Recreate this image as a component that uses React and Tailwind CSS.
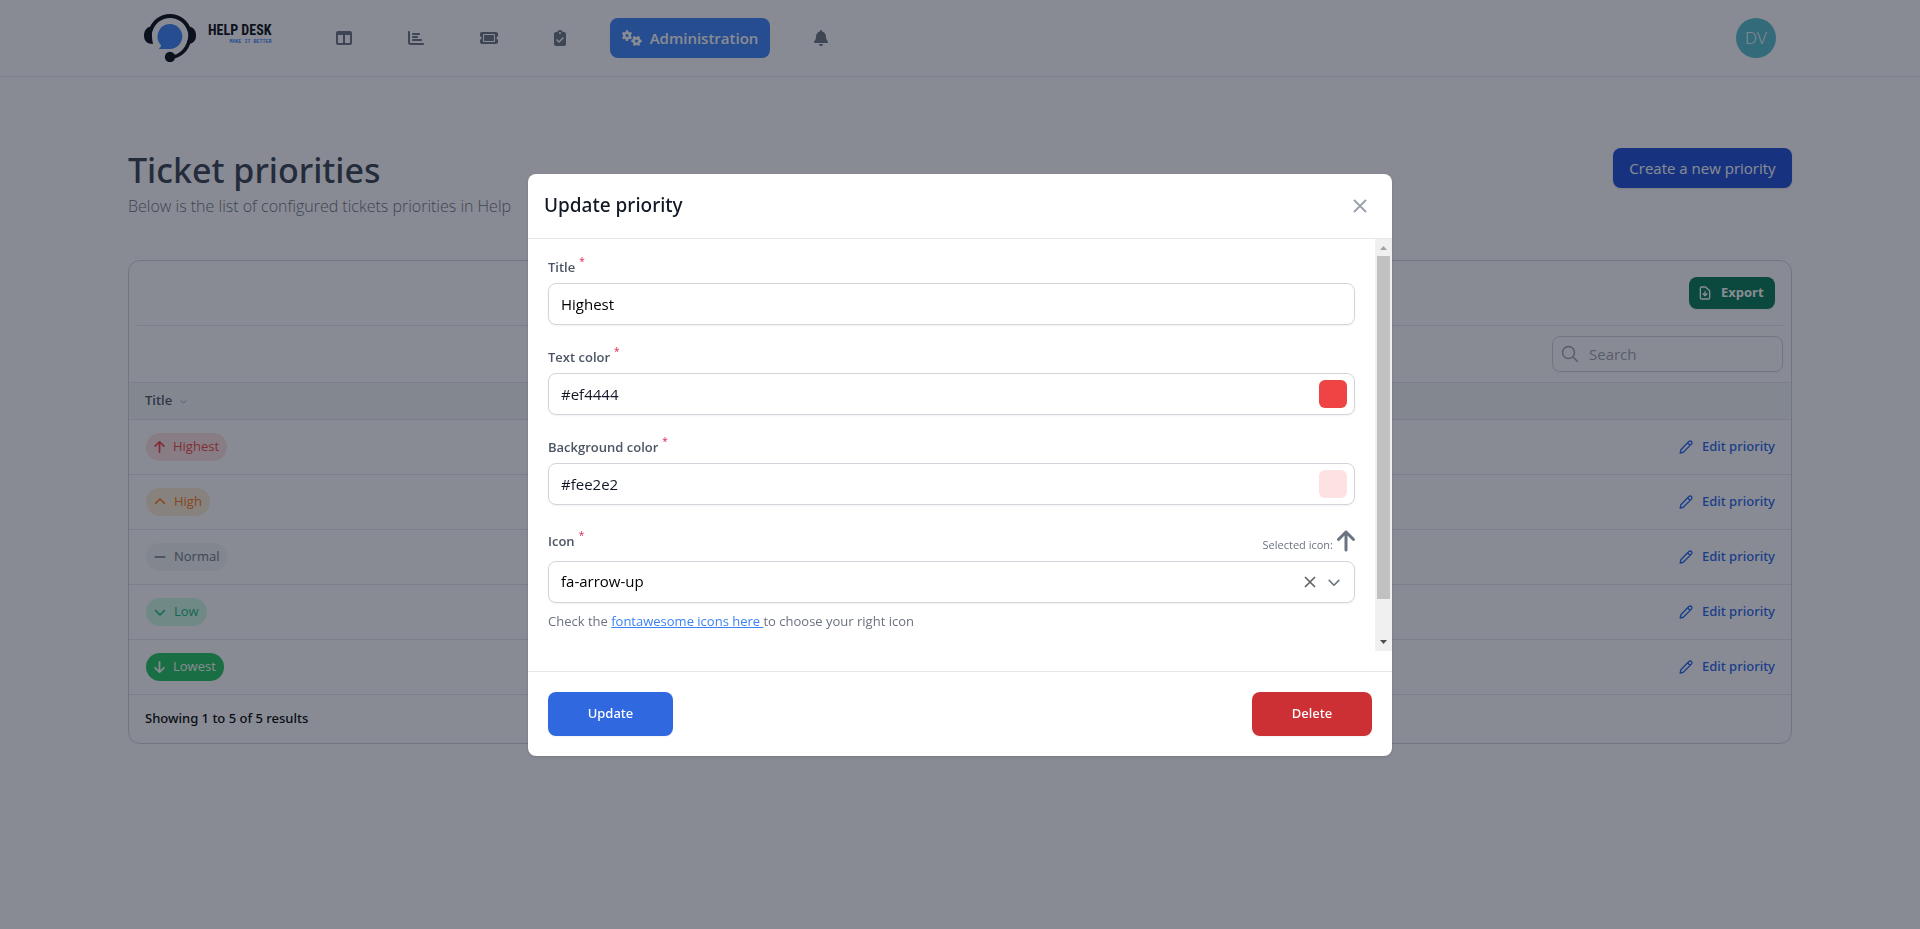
import React from "react";
import {
  FaArrowDown,
  FaArrowUp,
  FaBell,
  FaChevronDown,
  FaChevronUp,
  FaMinus,
} from "react-icons/fa6";

const priorities = [
  { title: "Highest", icon: FaArrowUp, iconSize: "w-[11px]", badge: "bg-[#fee2e2] text-[#ef4444]" },
  { title: "High", icon: FaChevronUp, iconSize: "w-3", badge: "bg-[#ffedd5] text-[#f97316]" },
  { title: "Normal", icon: FaMinus, iconSize: "w-3", badge: "bg-[#f3f4f6] text-[#6b7280]" },
  { title: "Low", icon: FaChevronDown, iconSize: "w-3", badge: "bg-[#d1fae5] text-[#10b981]" },
  { title: "Lowest", icon: FaArrowDown, iconSize: "w-[11px]", badge: "bg-[#22c55e] text-white" },
];

function Logo() {
  return (
    <a href="#home" aria-label="Help Desk" className="flex w-[148px] items-center gap-3">
      <svg viewBox="0 0 52 48" className="h-12 w-[52px] shrink-0" aria-hidden="true">
        <path d="M6 18C9 8 16.5 2 26 2s17 6 20 16" fill="none" stroke="#060a14" strokeWidth="4" />
        <path d="M45.5 26C43 36 36 42.5 28 43" fill="none" stroke="#060a14" strokeWidth="3.6" />
        <path d="M9 12.2C3 12.5 0 16 0 21.500C0 27 3 30 9 30C7.600 24 7.600 18 9 12.200Z" fill="#060a14" />
        <path d="M43 12.200C49 12.500 52 16 52 21.500C52 27 49 30 43 30C44.600 24 44.600 18 43 12.200Z" fill="#060a14" />
        <circle cx="26" cy="43" r="5.200" fill="#060a14" />
        <path d="M26 10a12.300 12.500 0 1 1 0 25H14.500c1.600-1 2.400-2.200 2.500-3.800A12.300 12.500 0 0 1 26 10Z" fill="#3b82f6" />
      </svg>
      <span className="flex flex-col items-end pb-2">
        <span className="font-['Roboto_Condensed','Roboto',sans-serif] text-[14px] leading-4 font-bold whitespace-nowrap text-[#060a14]">
          HELP DESK
        </span>
        <span className="font-['Liberation_Mono',monospace] text-[5px] leading-[8px] font-bold whitespace-nowrap text-[#3b82f6]">
          MAKE IT BETTER
        </span>
      </span>
    </a>
  );
}

function NavLink({ label, children }) {
  return (
    <a href={"#" + label.toLowerCase()} aria-label={label} className="flex h-10 items-center px-3 text-[#6b7280]">
      {children}
    </a>
  );
}

function Header() {
  return (
    <header className="border-b border-[#e5e7eb] bg-white">
      <div className="flex h-[76px] items-center justify-between px-36">
        <nav className="flex items-center gap-8">
          <Logo />
          <NavLink label="Board">
            <svg viewBox="0 0 512 512" className="size-4" fill="currentColor">
              <path d="M0 96C0 60.700 28.700 32 64 32H448c35.300 0 64 28.700 64 64V416c0 35.300-28.700 64-64 64H64c-35.300 0-64-28.700-64-64V96zm64 64V416H224V160H64zm384 0H288V416H448V160z" />
            </svg>
          </NavLink>
          <NavLink label="Analytics">
            <svg viewBox="0 0 512 512" className="size-4" fill="currentColor">
              <path d="M32 32c17.700 0 32 14.300 32 32V400c0 8.800 7.200 16 16 16H480c17.700 0 32 14.300 32 32s-14.300 32-32 32H80c-44.200 0-80-35.800-80-80V64C0 46.300 14.300 32 32 32zm96 96c0-17.700 14.300-32 32-32l192 0c17.700 0 32 14.300 32 32s-14.300 32-32 32l-192 0c-17.700 0-32-14.300-32-32zm32 64H288c17.700 0 32 14.300 32 32s-14.300 32-32 32H160c-17.700 0-32-14.300-32-32s14.300-32 32-32zm0 96H416c17.700 0 32 14.300 32 32s-14.300 32-32 32H160c-17.700 0-32-14.300-32-32s14.300-32 32-32z" />
            </svg>
          </NavLink>
          <NavLink label="Tickets">
            <svg viewBox="0 0 576 512" className="h-4 w-[18px]" fill="currentColor">
              <path d="M64 64C28.700 64 0 92.700 0 128v64c0 8.800 7.400 15.700 15.700 18.600C34.500 217.100 48 235 48 256s-13.500 38.900-32.300 45.400C7.400 304.300 0 311.200 0 320v64c0 35.300 28.700 64 64 64H512c35.300 0 64-28.700 64-64V320c0-8.800-7.400-15.700-15.700-18.600C541.500 294.900 528 277 528 256s13.500-38.900 32.300-45.400c8.300-2.900 15.700-9.800 15.700-18.600V128c0-35.300-28.700-64-64-64H64zm64 112l0 160c0 8.800 7.200 16 16 16H432c8.800 0 16-7.200 16-16V176c0-8.800-7.200-16-16-16H144c-8.800 0-16 7.200-16 16zM96 160c0-17.700 14.300-32 32-32H448c17.700 0 32 14.300 32 32V352c0 17.700-14.300 32-32 32H128c-17.700 0-32-14.300-32-32V160z" />
            </svg>
          </NavLink>
          <NavLink label="Tasks">
            <svg viewBox="0 0 384 512" className="h-4 w-3" fill="currentColor">
              <path d="M192 0c-41.800 0-77.400 26.700-90.500 64H64C28.700 64 0 92.700 0 128V448c0 35.300 28.700 64 64 64H320c35.300 0 64-28.700 64-64V128c0-35.300-28.700-64-64-64H282.500C269.400 26.700 233.800 0 192 0zm0 64a32 32 0 1 1 0 64 32 32 0 1 1 0-64zM305 273L177 401c-9.400 9.400-24.600 9.400-33.900 0L79 337c-9.400-9.400-9.400-24.600 0-33.900s24.600-9.400 33.900 0l47 47L271 239c9.400-9.400 24.600-9.400 33.900 0s9.400 24.600 0 33.900z" />
            </svg>
          </NavLink>
          <a
            href="#administration"
            className="flex h-10 w-40 items-center justify-center gap-2 rounded-lg bg-[#3b82f6] text-[15px] font-semibold text-white"
          >
            <svg viewBox="0 0 640 512" className="h-4 w-5" fill="currentColor" aria-hidden="true">
              <path d="M308.500 135.300c7.100-6.300 9.900-16.200 6.200-25c-2.300-5.300-4.800-10.500-7.600-15.500L304 89.400c-3-5-6.300-9.900-9.800-14.600c-5.700-7.600-15.700-10.100-24.700-7.100l-28.200 9.300c-10.700-8.800-23-16-36.200-20.900L199 27.100c-1.900-9.300-9.100-16.700-18.500-17.800C173.900 8.400 167.200 8 160.400 8h-.700c-6.800 0-13.500 .4-20.100 1.200c-9.400 1.100-16.600 8.600-18.500 17.800L115 56.100c-13.300 5-25.500 12.100-36.200 20.900L50.500 67.800c-9-3-19-.5-24.700 7.100c-3.500 4.700-6.800 9.600-9.900 14.600l-3 5.300c-2.800 5-5.300 10.200-7.600 15.600c-3.700 8.700-.9 18.600 6.200 25l22.200 19.800C32.600 161.900 31.600 170.600 31.600 179.500s1 17.600 2.200 25.900L11.500 225c-7.100 6.300-9.900 16.200-6.200 25c2.300 5.300 4.800 10.500 7.600 15.600l3 5.200c3 5.100 6.300 9.900 9.900 14.600c5.700 7.600 15.700 10.100 24.700 7.100l28.200-9.300c10.700 8.800 23 16 36.200 20.900l6.100 29.100c1.900 9.300 9.100 16.700 18.500 17.800c6.700 .8 13.500 1.200 20.400 1.200s13.700-.4 20.400-1.200c9.400-1.100 16.600-8.600 18.500-17.800l6.100-29.100c13.300-5 25.500-12.100 36.200-20.900l28.200 9.300c9 3 19 .5 24.700-7.100c3.500-4.700 6.800-9.500 9.800-14.600l3.100-5.400c2.800-5 5.300-10.200 7.600-15.500c3.700-8.700 .9-18.600-6.200-25l-22.200-19.800c1.200-8.300 1.900-17 1.900-25.800s-1-17.600-1.900-25.900l22.200-19.900zM112 176a48 48 0 1 1 96 0 48 48 0 1 1-96 0zM504.700 500.500c6.300 7.100 16.200 9.900 25 6.200c5.300-2.300 10.500-4.800 15.500-7.600l5.400-3.100c5-3 9.900-6.300 14.600-9.800c7.600-5.700 10.100-15.700 7.100-24.700l-9.300-28.200c8.800-10.700 16-23 20.900-36.200l29.100-6.100c9.300-1.900 16.700-9.100 17.800-18.500c.8-6.700 1.200-13.500 1.200-20.400s-.4-13.700-1.200-20.400c-1.100-9.400-8.600-16.600-17.800-18.500L583.900 307c-5-13.300-12.100-25.500-20.900-36.200l9.300-28.200c3-9 .5-19-7.100-24.700c-4.700-3.500-9.600-6.800-14.600-9.900l-5.300-3c-5-2.800-10.200-5.300-15.600-7.600c-8.700-3.700-18.600-.9-25 6.200l-19.800 22.200c-8.200-1.200-16.900-1.900-25.800-1.900s-17.600 1-25.900 1.900l-19.800-22.200c-6.300-7.100-16.200-9.900-25-6.200c-5.300 2.300-10.500 4.800-15.600 7.600l-5.200 3c-5.100 3-9.900 6.300-14.600 9.900c-7.600 5.700-10.100 15.700-7.100 24.700l9.300 28.200c-8.800 10.700-16 23-20.900 36.200L315.100 313c-9.300 1.900-16.700 9.100-17.800 18.500c-.8 6.700-1.200 13.500-1.200 20.400s.4 13.700 1.200 20.400c1.100 9.400 8.600 16.600 17.800 18.500l29.100 6.100c5 13.300 12.100 25.500 20.900 36.200l-9.300 28.200c-3 9-.5 19 7.100 24.700c4.700 3.500 9.500 6.800 14.600 9.800l5.400 3.100c5 2.800 10.200 5.300 15.500 7.600c8.700 3.700 18.600 .9 25-6.200l19.800-22.200c8.200 1.200 16.900 1.900 25.800 1.900s17.600-1 25.900-1.900l19.800 22.200zM464 304a48 48 0 1 1 0 96 48 48 0 1 1 0-96z" />
            </svg>
            Administration
          </a>
          <NavLink label="Notifications">
            <FaBell className="h-4 w-[14px]" />
          </NavLink>
        </nav>
        <button
          type="button"
          aria-label="Account menu"
          className="flex size-10 items-center justify-center rounded-full bg-[#56bfcc] text-[17px] font-light text-white"
        >
          DV
        </button>
      </div>
    </header>
  );
}

function PencilIcon() {
  return (
    <svg viewBox="0 0 20 20" className="size-4" fill="none" stroke="currentColor" strokeWidth="1.700" strokeLinejoin="round" aria-hidden="true">
      <path d="M13.600 3.200a2.200 2.200 0 0 1 3.200 3.200L6.600 16.600l-3.900 1 .9-4.200L13.600 3.200Z M12 4.800l3.200 3.200" />
    </svg>
  );
}

function PrioritiesCard() {
  return (
    <section className="rounded-xl border border-[#d1d5db] bg-white">
      <div className="px-2">
        <div className="flex h-[65px] items-center justify-end border-b border-[#e5e7eb] px-2">
          <button
            type="button"
            className="flex h-8 w-[86px] items-center gap-2 rounded-lg bg-[#057a55] px-2 text-[13px] font-bold text-white shadow-xs"
          >
            <svg viewBox="0 0 24 24" className="size-4" fill="none" stroke="currentColor" strokeWidth="2" strokeLinejoin="round" strokeLinecap="round" aria-hidden="true">
              <path d="M12 10v6m0 0l-3-3m3 3l3-3m2 8H7a2 2 0 01-2-2V5a2 2 0 012-2h5.600a1 1 0 01.7.3l5.400 5.400a1 1 0 01.3.7V19a2 2 0 01-2 2z" />
            </svg>
            Export
          </button>
        </div>
        <div className="flex h-14 items-center justify-end">
          <label className="flex h-9 w-[231px] items-center gap-2 rounded-lg border border-[#d1d5db] px-2 text-[#9ca3af] shadow-xs">
            <svg viewBox="0 0 24 24" className="size-[18px] shrink-0" fill="none" stroke="currentColor" strokeWidth="2" strokeLinecap="round" aria-hidden="true">
              <circle cx="10" cy="10" r="8" />
              <path d="M16 16l6 6" />
            </svg>
            <input
              type="search"
              aria-label="Search"
              placeholder="Search"
              className="h-full w-full min-w-0 bg-transparent pl-0.5 text-[15px] outline-none placeholder:text-[#9ca3af]"
            />
          </label>
        </div>
      </div>
      <table className="w-full border-t border-[#e5e7eb]">
        <thead>
          <tr className="h-[37px] border-b border-[#e5e7eb] bg-[#f5f8f8]">
            <th className="px-4 text-left text-[13px] font-semibold text-[#4b5563]">
              <span className="flex items-center gap-2">
                Title
                <FaChevronDown className="size-[7px] text-[#b0b5be]" />
              </span>
            </th>
            <th className="px-4" aria-label="Actions" />
          </tr>
        </thead>
        <tbody>
          {priorities.map(({ title, icon: Icon, iconSize, badge }) => (
            <tr key={title} className="h-[55px] border-b border-[#e5e7eb]">
              <td className="px-4">
                <span className={`ml-px inline-flex h-7 items-center gap-2 rounded-full px-2 text-[13px] ${badge}`}>
                  <Icon className={`h-[14px] ${iconSize}`} />
                  {title}
                </span>
              </td>
              <td className="px-4">
                <div className="flex justify-end">
                  <a href={"#edit-" + title.toLowerCase()} className="flex items-center gap-2 font-['Noto_Sans',sans-serif] text-[13px] font-medium text-[#2563eb]">
                    <PencilIcon />
                    Edit priority
                  </a>
                </div>
              </td>
            </tr>
          ))}
        </tbody>
      </table>
      <p className="flex h-12 items-center px-4 font-['Noto_Sans',sans-serif] text-[13px] font-medium text-black">
        Showing 1 to 5 of 5 results
      </p>
    </section>
  );
}

function FieldLabel({ htmlFor, children }) {
  return (
    <label htmlFor={htmlFor} className="flex text-[13px] leading-4 font-semibold text-[#4b5563]">
      {children}
      <span className="-mt-1 pl-1 text-[10px] leading-3 font-medium text-[#e02450]">*</span>
    </label>
  );
}

const fieldBox = "flex h-[42px] items-center rounded-lg border border-[#d1d5db] bg-white shadow-xs";
const fieldText = "h-full min-w-0 flex-1 rounded-lg bg-transparent px-3 text-[15px] outline-none";

function ColorField({ id, label, value, swatch }) {
  return (
    <div className="flex flex-col gap-2">
      <FieldLabel htmlFor={id}>{label}</FieldLabel>
      <div className={fieldBox}>
        <input id={id} type="text" defaultValue={value} className={`${fieldText} text-[#111827]`} />
        <button type="button" aria-label={"Pick " + label.toLowerCase()} className={`mr-[7px] size-7 rounded-md ${swatch}`} />
      </div>
    </div>
  );
}

function ScrollTrack() {
  return (
    <div className="flex w-[17px] shrink-0 flex-col items-center bg-[#f0f0f0]" aria-hidden="true">
      <svg viewBox="0 0 17 17" className="size-[17px] shrink-0">
        <path d="M5 11h7L8.500 7Z" fill="#a3a3a3" />
      </svg>
      <div className="h-[343px] w-[13px] bg-[#c1c1c1]" />
      <svg viewBox="0 0 17 17" className="mt-auto size-[17px] shrink-0">
        <path d="M5 6h7L8.500 10Z" fill="#505050" />
      </svg>
    </div>
  );
}

function PriorityDialog() {
  return (
    <div className="fixed inset-0 z-10 flex items-center justify-center bg-[#111827]/50">
      <form role="dialog" aria-modal="true" aria-labelledby="dialog-title" className="w-full max-w-[864px] rounded-lg bg-white shadow-sm">
        <div className="flex h-[65px] items-center justify-between border-b border-[#e5e7eb] pr-[22px] pl-4">
          <h2 id="dialog-title" className="font-['Noto_Sans',sans-serif] text-[19px] font-medium text-[#111827]">
            Update priority
          </h2>
          <button type="button" aria-label="Close" className="flex size-5 items-center justify-center text-[#9ca3af]">
            <svg viewBox="0 0 14 14" className="size-[14px]" fill="none" stroke="currentColor" strokeWidth="2" strokeLinecap="round">
              <path d="M1.500 1.500l11 11M12.500 1.500l-11 11" />
            </svg>
          </button>
        </div>
        <div className="flex h-[412px]">
          <div className="flex min-w-0 flex-1 flex-col gap-6 overflow-hidden p-5">
            <div className="flex flex-col gap-2">
              <FieldLabel htmlFor="title">Title</FieldLabel>
              <div className={fieldBox}>
                <input id="title" type="text" defaultValue="Highest" className={`${fieldText} text-black`} />
              </div>
            </div>
            <ColorField id="text-color" label="Text color" value="#ef4444" swatch="bg-[#ef4444]" />
            <ColorField id="background-color" label="Background color" value="#fee2e2" swatch="bg-[#fee2e2]" />
            <div className="flex flex-col">
              <div className="flex h-8 items-start justify-between">
                <div className="pt-1">
                  <FieldLabel htmlFor="icon">Icon</FieldLabel>
                </div>
                <div className="flex items-end gap-1 text-[#6b7280]">
                  <span className="text-[11px] leading-4">Selected icon:</span>
                  <FaArrowUp className="h-6 w-[18px]" />
                </div>
              </div>
              <div className={fieldBox}>
                <select id="icon" defaultValue="fa-arrow-up" className={`${fieldText} appearance-none text-black`}>
                  <option>fa-arrow-up</option>
                  <option>fa-arrow-down</option>
                </select>
                <button type="button" aria-label="Clear icon" className="flex size-6 items-center justify-center text-[#606060]">
                  <svg viewBox="0 0 12 12" className="size-3" fill="none" stroke="currentColor" strokeWidth="1.600">
                    <path d="M1 1l10 10M11 1L1 11" />
                  </svg>
                </button>
                <svg viewBox="0 0 20 20" className="mr-3 ml-1 size-4" fill="none" stroke="#6b7280" strokeWidth="2" strokeLinecap="round" strokeLinejoin="round" aria-hidden="true">
                  <path d="M4 8l6 6 6-6" />
                </svg>
              </div>
              <p className="pt-2 text-[13px] leading-5 text-[#6b7280]">
                Check the{" "}
                <a href="#icons" className="text-[#3b82f6] underline">
                  fontawesome icons here{" "}
                </a>
                to choose your right icon
              </p>
            </div>
          </div>
          <ScrollTrack />
        </div>
        <div className="mt-5 flex items-center justify-between border-t border-[#e5e7eb] p-5 font-['Noto_Sans',sans-serif]">
          <button type="submit" className="h-11 w-[125px] rounded-lg bg-[#3068df] text-[13px] font-medium text-white shadow-xs">
            Update
          </button>
          <button type="button" className="h-11 w-[120px] rounded-lg bg-[#cc3035] text-[13px] font-medium text-white shadow-xs">
            Delete
          </button>
        </div>
      </form>
    </div>
  );
}

export default function App() {
  return (
    <div className="min-h-screen bg-white font-['Open_Sans','Noto_Sans',sans-serif]">
      <Header />
      <main className="px-32 pt-[71px] pb-16">
        <div className="mb-10 flex items-start justify-between">
          <div>
            <h1 className="font-['Noto_Sans',sans-serif] text-[34px] leading-[44px] font-medium text-[#374151]">Ticket priorities</h1>
            <p className="text-[16px] leading-7 font-light text-[#6b7280]">
              Below is the list of configured tickets priorities in Help
            </p>
          </div>
          <button type="button" className="h-10 w-[179px] rounded-lg bg-[#1d4ed8] text-[15px] text-white shadow-sm">
            Create a new priority
          </button>
        </div>
        <PrioritiesCard />
      </main>
      <PriorityDialog />
    </div>
  );
}
